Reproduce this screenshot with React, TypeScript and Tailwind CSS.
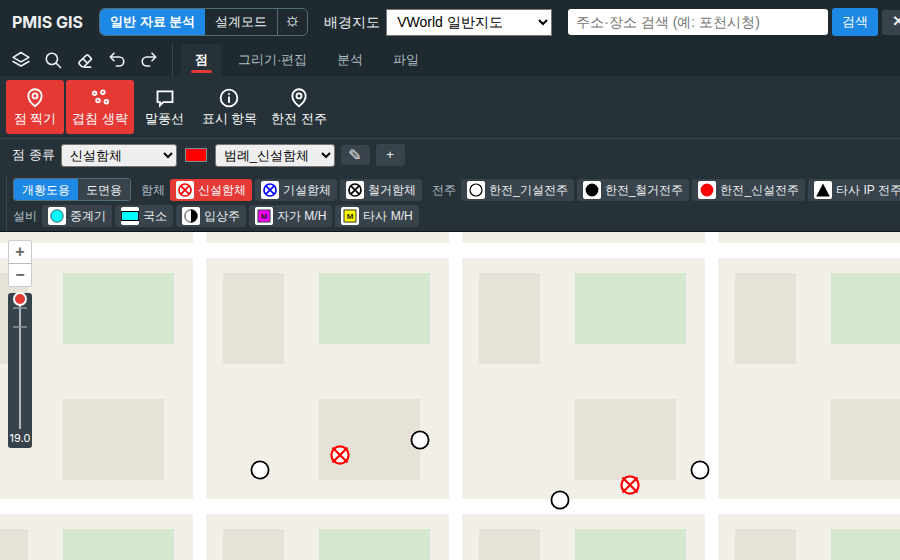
import { useState } from "react"
import type { ReactNode } from "react"
import clsx from "clsx"

type SymbolName = "newBox" | "oldBox" | "goneBox" | "pole" | "gonePole" | "newPole" | "ipPole" | "relay" | "office" | "riser" | "ownMh" | "otherMh"

function CrossCircle({ color }: { color: string }) {
  return (
    <g fill="none" stroke={color} strokeWidth="1.7">
      <circle cx="9" cy="9" r="6" />
      <path d="M4.8 4.8l8.4 8.4M13.2 4.8l-8.4 8.4" />
    </g>
  )
}

function Manhole({ color }: { color: string }) {
  return (
    <g>
      <rect x="3" y="3" width="12" height="12" fill={color} stroke="#333" strokeWidth="1" />
      <text x="9" y="12" textAnchor="middle" fontSize="8" fontWeight="700" fill="#222">M</text>
    </g>
  )
}

const symbols: Record<SymbolName, ReactNode> = {
  newBox: <CrossCircle color="#ff0000" />,
  oldBox: <CrossCircle color="#0000ff" />,
  goneBox: <CrossCircle color="#000000" />,
  pole: <circle cx="9" cy="9" r="6" fill="#fff" stroke="#000" strokeWidth="1.2" />,
  gonePole: <circle cx="9" cy="9" r="6.4" fill="#000" />,
  newPole: <circle cx="9" cy="9" r="6.4" fill="#f00" />,
  ipPole: <path d="M9 2.5L15.8 15.5H2.2z" fill="#000" />,
  relay: <circle cx="9" cy="9" r="6.2" fill="#0ff" stroke="#333" strokeWidth="0.8" />,
  office: <rect x="0.5" y="4.5" width="17" height="9" fill="#0ff" stroke="#000" strokeWidth="1" />,
  riser: (
    <g>
      <circle cx="9" cy="9" r="6.2" fill="#fff" stroke="#000" strokeWidth="0.8" />
      <path d="M9 2.6a6.4 6.4 0 0 1 0 12.8z" fill="#000" />
    </g>
  ),
  ownMh: <Manhole color="#ff00ff" />,
  otherMh: <Manhole color="#ffff00" />,
}

function Icon({ children, className }: { children: ReactNode, className?: string }) {
  return (
    <svg viewBox="0 0 24 24" className={className} fill="none" stroke="currentColor" strokeWidth="2.2" strokeLinecap="round" strokeLinejoin="round" aria-hidden="true">
      {children}
    </svg>
  )
}

const pin = (
  <>
    <path d="M12 22s8-6.5 8-12.5a8 8 0 0 0-16 0C4 15.5 12 22 12 22z" />
    <circle cx="12" cy="9.5" r="3" />
  </>
)

const quickTools = [
  { label: "레이어", icon: <path d="M12 2L1.5 8.5 12 14.5l10.5-6zM1.5 14L12 20l10.5-6" /> },
  { label: "찾기", icon: <><circle cx="10.5" cy="10.5" r="7.5" /><path d="M16 16l6 6" /></> },
  { label: "지우개", icon: <path d="M4.5 14.5L14 5.5q1-1 2 0l4 4q1 1 0 2L10.5 21H8l-3.5-3.5q-1.5-1.5 0-3zM9.5 10.5l6 6M11 21.5h8.5" /> },
  { label: "실행 취소", icon: <path d="M8 13L3 8l5-5M3 8h12a6 6 0 0 1 0 12h-4" /> },
  { label: "다시 실행", icon: <path d="M16 13l5-5-5-5M21 8H9a6 6 0 0 0 0 12h4" /> },
]

const tabs = ["점", "그리기·편집", "분석", "파일"]

const ribbon = [
  { label: "점 찍기", on: true, icon: pin },
  { label: "겹침 생략", on: true, icon: <><circle cx="5.4" cy="6.4" r="2.2" /><circle cx="15.4" cy="5" r="2.2" /><circle cx="9.6" cy="15" r="2.2" /><circle cx="19.6" cy="16.4" r="2.2" /></> },
  { label: "말풍선", on: false, icon: <path d="M3 4h18v13h-11l-4 4v-4H3z" strokeLinejoin="miter" /> },
  { label: "표시 항목", on: false, icon: <><circle cx="12" cy="12" r="10" /><path d="M12 11v6M12 7v.5" /></> },
  { label: "한전 전주", on: false, icon: pin },
]

const boxes: [SymbolName, string][] = [["newBox", "신설함체"], ["oldBox", "기설함체"], ["goneBox", "철거함체"]]
const poles: [SymbolName, string][] = [["pole", "한전_기설전주"], ["gonePole", "한전_철거전주"], ["newPole", "한전_신설전주"], ["ipPole", "타사 IP 전주"]]
const facilities: [SymbolName, string][] = [["relay", "중계기"], ["office", "국소"], ["riser", "입상주"], ["ownMh", "자가 M/H"], ["otherMh", "타사 M/H"]]

const markers = [
  { x: 260, y: 238, box: false },
  { x: 340, y: 223, box: true },
  { x: 420, y: 208, box: false },
  { x: 560, y: 268, box: false },
  { x: 630, y: 253, box: true },
  { x: 700, y: 238, box: false },
]

interface ChipsProps {
  label: string
  items: [SymbolName, string][]
  selected: string
  onSelect: (name: string) => void
}

function Chips({ label, items, selected, onSelect }: ChipsProps) {
  return (
    <div className="flex shrink-0 items-center gap-[5px]">
      <span className="font-[Inter,sans-serif] text-[#b0bec5]">{label}</span>
      <div className="flex gap-[3px]">
        {items.map(([symbol, name]) => (
          <button
            key={name}
            onClick={() => onSelect(name)}
            className={clsx("flex h-[22px] items-center gap-1 rounded-[3px] px-1.5", selected === name ? "bg-[#e53935] text-white" : "bg-[#38434c] text-[#eceff1]")}
          >
            <svg viewBox="0 0 18 18" className="size-[18px] rounded-xs bg-white" aria-hidden="true">{symbols[symbol]}</svg>
            {name}
          </button>
        ))}
      </div>
    </div>
  )
}

function Header() {
  return (
    <header className="flex h-11 items-center bg-[#1f2a30] px-3">
      <h1 className="shrink-0 font-[Inter,sans-serif] text-base font-bold">PMIS GIS</h1>
      <div className="ml-4 flex h-7 shrink-0 overflow-hidden rounded-md border border-[#546e7a] text-[13px]">
        <button className="bg-[#1e88e5] px-2.5 font-bold text-white">일반 자료 분석</button>
        <button className="px-2.5">설계모드</button>
        <button className="border-l border-[#546e7a] px-2 font-[Unifont,sans-serif]" aria-label="설정">⚙</button>
      </div>
      <label htmlFor="basemap" className="ml-4 shrink-0 font-[Inter,sans-serif] text-sm">배경지도</label>
      <select id="basemap" className="ml-1.5 h-[27px] w-[166px] shrink-0 border border-[#767676] bg-white px-1.5 text-sm text-black">
        <option>VWorld 일반지도</option>
      </select>
      <input aria-label="주소 검색" placeholder="주소·장소 검색 (예: 포천시청)" className="ml-4 h-[26px] w-[260px] shrink-0 rounded-[3px] bg-white px-2 text-sm text-black placeholder:text-[#757575]" />
      <button className="ml-1 h-7 shrink-0 rounded-[3px] bg-[#1e88e5] px-2.5 text-[13px] text-white">검색</button>
      <button className="ml-1 h-[25px] shrink-0 rounded-[3px] bg-[#38434c] px-2.5 font-[Unifont,sans-serif] text-[13px] text-white" aria-label="지우기">✕</button>
    </header>
  )
}

function MapView() {
  return (
    <main className="relative min-h-0 flex-1 overflow-hidden">
      <svg className="size-full" aria-hidden="true">
        <defs>
          <pattern id="blocks" x="206" y="26" width="256" height="256" patternUnits="userSpaceOnUse">
            <rect width="256" height="256" fill="#fff" />
            <rect width="243" height="241" fill="#f2efe9" />
            <rect x="17" y="15" width="61" height="91" fill="#e6e2d8" />
            <rect x="113" y="15" width="111" height="71" fill="#d5e8cf" />
            <rect x="113" y="141" width="101" height="81" fill="#e6e2d8" />
          </pattern>
        </defs>
        <rect width="100%" height="100%" fill="url(#blocks)" />
        {markers.map(({ x, y, box }) => (
          <g key={x} transform={`translate(${x} ${y})`}>
            <circle r="8.6" fill="#fff" stroke={box ? "#f00" : "#000"} strokeWidth={box ? 2.2 : 1.8} />
            {box && <path d="M-7.5-7.5l15 15M7.5-7.5l-15 15" stroke="#f00" strokeWidth="2.2" />}
          </g>
        ))}
      </svg>
      <div className="absolute top-2 left-2 flex w-6 flex-col gap-1.5">
        <div className="flex flex-col divide-y divide-[#bbb] rounded-xs border border-[#ccc] bg-white text-base font-bold text-[#666]">
          <button className="flex h-[23px] items-center justify-center" aria-label="확대">+</button>
          <button className="flex h-[22px] items-center justify-center" aria-label="축소">−</button>
        </div>
        <div className="rounded-[3px] bg-[#37424a] pb-0.5 text-center text-[11px] text-white">
          <svg viewBox="0 0 24 137" className="w-6 overflow-visible" aria-hidden="true">
            <path d="M12 6v130" stroke="#b0b8bc" strokeWidth="2" />
            <path d="M5 15h14M5 34h14" stroke="#8f999e" strokeWidth="1.5" />
            <circle cx="12" cy="6" r="6" fill="#e53935" stroke="#fff" strokeWidth="2" />
          </svg>
          <div className="font-[Inter,sans-serif] leading-4">19.0</div>
        </div>
      </div>
    </main>
  )
}

function App() {
  const [tab, setTab] = useState("점")
  const [symbol, setSymbol] = useState("신설함체")

  return (
    <div className="flex h-screen flex-col overflow-hidden bg-[#263238] font-['Liberation_Sans',sans-serif] whitespace-nowrap text-[#eceff1]">
      <Header />

      <nav className="flex h-8 items-stretch bg-[#1f2a30] text-[13px]">
        <div className="flex border-r border-[#37474f] pr-[7px] pl-[5px]">
          {quickTools.map(({ label, icon }) => (
            <button key={label} aria-label={label} className="flex w-8 items-center justify-center">
              <Icon className="size-[18px]">{icon}</Icon>
            </button>
          ))}
        </div>
        <div className="ml-2 flex gap-0.5">
          {tabs.map((name) => (
            <button
              key={name}
              onClick={() => setTab(name)}
              className={clsx("relative px-3.5", tab === name ? "rounded-t-sm bg-[#263238] font-bold text-white" : "text-[#b0bec5]")}
            >
              {name}
              {tab === name && <span className="absolute inset-x-2.5 bottom-[3px] h-[3px] rounded-xs bg-[#e53935]" />}
            </button>
          ))}
        </div>
      </nav>

      <div className="flex gap-0.5 border-b border-[#37474f] px-1.5 py-1 text-[13px]">
        {ribbon.map(({ label, on, icon }) => (
          <button key={label} className={clsx("flex h-[54px] min-w-[58px] flex-col items-center justify-center gap-px rounded-[3px] px-1.5 pt-[3px] text-white", on && "bg-[#e53935]")}>
            <Icon className="size-5">{icon}</Icon>
            {label}
          </button>
        ))}
      </div>

      <div className="flex h-8 items-center px-3 text-[13px]">
        <label htmlFor="kind" className="font-[Inter,sans-serif]">점 종류</label>
        <select id="kind" className="ml-1.5 h-[23px] w-[116px] rounded-[3px] border border-[#767676] bg-[#efefef] px-1 text-black">
          <option>신설함체</option>
        </select>
        <button className="ml-2 h-3.5 w-[22px] border border-[#78909c] bg-[#f00]" aria-label="색상" />
        <select aria-label="범례" className="ml-2 h-[23px] w-[120px] rounded-[3px] border border-[#767676] bg-[#efefef] px-1 text-black">
          <option>범례_신설함체</option>
        </select>
        <button className="ml-1.5 h-5 w-[29px] rounded-[3px] bg-[#38434c] font-[Unifont,sans-serif]" aria-label="범례 수정">✎</button>
        <button className="ml-1.5 h-[22px] w-[29px] rounded-[3px] bg-[#38434c]" aria-label="범례 추가">+</button>
      </div>

      <section className="mt-1 ml-1.5 flex flex-col gap-1 border-l border-[#37474f] pt-[3px] pb-1 pl-1.5 text-xs">
        <div className="flex items-center gap-2.5">
          <div className="flex h-[23px] shrink-0 overflow-hidden rounded-[3px] border border-[#546e7a]">
            <button className="bg-[#1e88e5] px-2 text-white">개황도용</button>
            <button className="bg-[#38434c] px-2">도면용</button>
          </div>
          <Chips label="함체" items={boxes} selected={symbol} onSelect={setSymbol} />
          <Chips label="전주" items={poles} selected={symbol} onSelect={setSymbol} />
        </div>
        <Chips label="설비" items={facilities} selected={symbol} onSelect={setSymbol} />
      </section>
      <div className="h-px bg-[#0f171b]" />

      <MapView />
    </div>
  )
}

export default App
